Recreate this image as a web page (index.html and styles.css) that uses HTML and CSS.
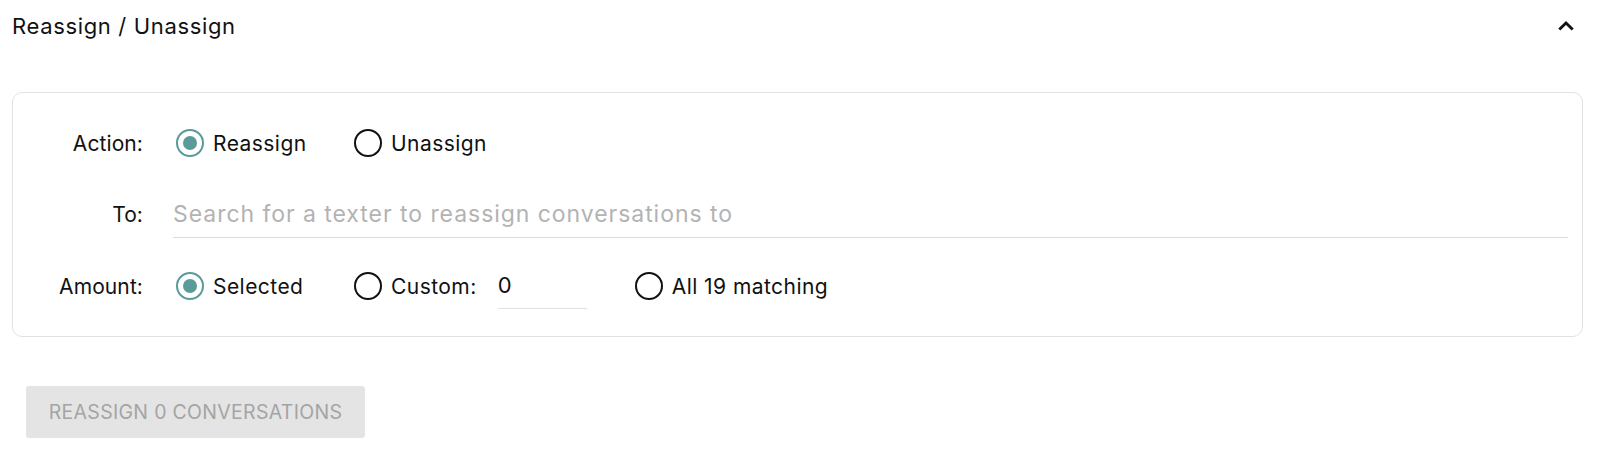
FILE: index.html
```html
<!DOCTYPE html>
<html lang="en">
<head>
<meta charset="utf-8">
<title>Reassign / Unassign</title>
<link rel="stylesheet" href="styles.css">
</head>
<body>
<section class="panel">
  <header class="panel-head">
    <h2 class="panel-title">Reassign / Unassign</h2>
    <button class="collapse" type="button" aria-label="Collapse">
      <svg viewBox="0 0 24 24" width="24" height="24"><path d="M5.3 15.6 L12 8.9 L18.7 15.6" fill="none" stroke="#111" stroke-width="2.8" stroke-linecap="butt" stroke-linejoin="miter"/></svg>
    </button>
  </header>

  <div class="card">
    <div class="row">
      <span class="label">Action:</span>
      <div class="options">
        <label class="option option-first"><span class="radio checked"></span><span class="opt-text">Reassign</span></label>
        <label class="option"><span class="radio"></span><span class="opt-text">Unassign</span></label>
      </div>
    </div>
    <div class="row">
      <span class="label">To:</span>
      <div class="field"><span class="placeholder">Search for a texter to reassign conversations to</span></div>
    </div>
    <div class="row">
      <span class="label">Amount:</span>
      <div class="options">
        <label class="option option-first"><span class="radio checked"></span><span class="opt-text">Selected</span></label>
        <label class="option option-custom"><span class="radio"></span><span class="opt-text">Custom:</span><span class="mini-field">0</span></label>
        <label class="option"><span class="radio"></span><span class="opt-text">All 19 matching</span></label>
      </div>
    </div>
  </div>

  <button class="submit" type="button" disabled>REASSIGN 0 CONVERSATIONS</button>
</section>
</body>
</html>
```

FILE: styles.css
```css
* { box-sizing: border-box; }

body {
  margin: 0;
  background: #ffffff;
  font-family: "Inter", "Liberation Sans", sans-serif;
  color: #111111;
}

.panel { width: 1600px; }

.panel-head {
  height: 52px;
  display: flex;
  align-items: center;
  justify-content: space-between;
  padding: 0 22px 0 12px;
}

.panel-title {
  margin: 0;
  font-size: 22px;
  font-weight: 400;
  letter-spacing: 0.65px;
  color: #111;
}

.collapse {
  width: 24px;
  height: 24px;
  padding: 0;
  border: 0;
  background: none;
  display: block;
}
.collapse svg { display: block; }

.card {
  margin: 40px 17px 0 12px;
  border: 1px solid #e2e2e2;
  border-radius: 10px;
  padding: 26px 0 26px 0;
  display: grid;
  grid-template-rows: 48px 48px 48px;
  row-gap: 23.5px;
}

.row {
  display: grid;
  grid-template-columns: 130px 1fr;
  column-gap: 30px;
  align-items: center;
  padding-right: 14px;
  font-size: 21px;
  letter-spacing: 0.45px;
}

.label {
  text-align: right;
  color: #111;
  letter-spacing: 0.1px;
}

.options {
  display: flex;
  align-items: center;
  padding-left: 3px;
}

.option {
  display: flex;
  align-items: center;
  gap: 9px;
  margin-right: 48px;
}
.option-first { width: 178px; margin-right: 0; }

.radio {
  width: 28px;
  height: 28px;
  border-radius: 50%;
  border: 2.8px solid #111;
  display: flex;
  align-items: center;
  justify-content: center;
  flex: none;
}
.radio.checked { border-color: #5a9a9b; }
.radio.checked::after {
  content: "";
  width: 14px;
  height: 14px;
  border-radius: 50%;
  background: #5a9a9b;
}

.field {
  height: 47px;
  display: flex;
  align-items: center;
  border-bottom: 1px solid #dcdcdc;
}

.placeholder {
  color: #b3b3b3;
  font-size: 23px;
  letter-spacing: 0.95px;
}

.mini-field {
  display: block;
  width: 89px;
  height: 46px;
  line-height: 45px;
  margin-left: 12px;
  font-size: 22px;
  border-bottom: 1px solid #e0e0e0;
}

.submit {
  display: block;
  margin: 49px 0 0 26px;
  width: 339px;
  height: 52px;
  border: 0;
  border-radius: 3px;
  background: #e4e4e4;
  color: #a4a4a4;
  font-family: "Inter", "Liberation Sans", sans-serif;
  font-size: 19.5px;
  letter-spacing: 0.3px;
  padding: 0;
}
```
